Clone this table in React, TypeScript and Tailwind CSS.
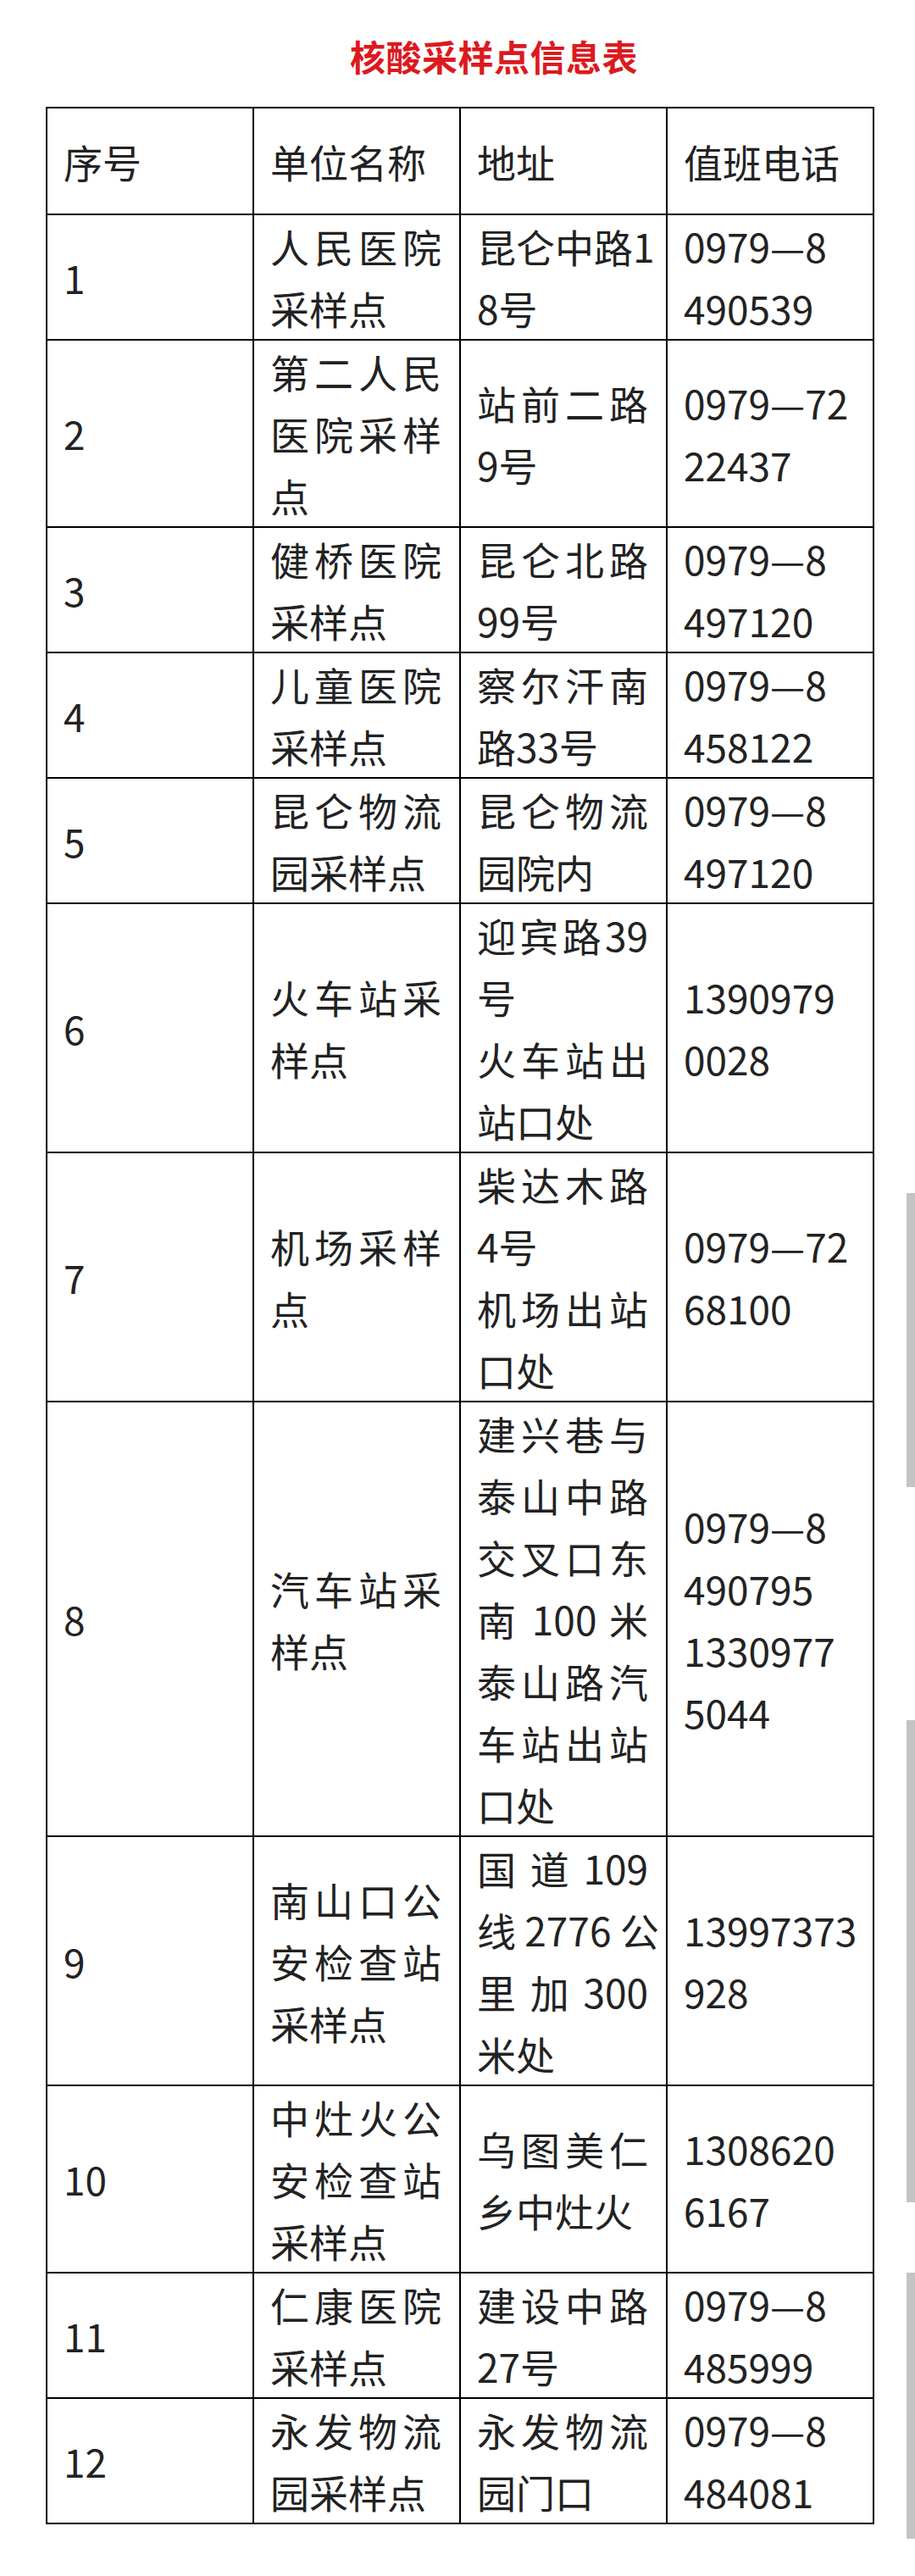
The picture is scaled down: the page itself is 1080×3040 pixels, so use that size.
type Cell = string[];
type Row = { no: string; name: Cell; addr: Cell; tel: Cell };

// lines starting with "=" are justified across the cell width
const rows: Row[] = [
  { no: "1", name: ["=人民医院", "采样点"], addr: ["=昆仑中路1", "8号"], tel: ["0979—8", "490539"] },
  { no: "2", name: ["=第二人民", "=医院采样", "点"], addr: ["=站前二路", "9号"], tel: ["0979—72", "22437"] },
  { no: "3", name: ["=健桥医院", "采样点"], addr: ["=昆仑北路", "99号"], tel: ["0979—8", "497120"] },
  { no: "4", name: ["=儿童医院", "采样点"], addr: ["=察尔汗南", "路33号"], tel: ["0979—8", "458122"] },
  { no: "5", name: ["=昆仑物流", "园采样点"], addr: ["=昆仑物流", "园院内"], tel: ["0979—8", "497120"] },
  { no: "6", name: ["=火车站采", "样点"], addr: ["=迎宾路39", "号", "=火车站出", "站口处"], tel: ["1390979", "0028"] },
  { no: "7", name: ["=机场采样", "点"], addr: ["=柴达木路", "4号", "=机场出站", "口处"], tel: ["0979—72", "68100"] },
  {
    no: "8",
    name: ["=汽车站采", "样点"],
    addr: ["=建兴巷与", "=泰山中路", "=交叉口东", "=南 100 米", "=泰山路汽", "=车站出站", "口处"],
    tel: ["0979—8", "490795", "1330977", "5044"],
  },
  { no: "9", name: ["=南山口公", "=安检查站", "采样点"], addr: ["=国 道 109", "=线 2776 公", "=里 加 300", "米处"], tel: ["13997373", "928"] },
  { no: "10", name: ["=中灶火公", "=安检查站", "采样点"], addr: ["=乌图美仁", "乡中灶火"], tel: ["1308620", "6167"] },
  { no: "11", name: ["=仁康医院", "采样点"], addr: ["=建设中路", "27号"], tel: ["0979—8", "485999"] },
  { no: "12", name: ["=永发物流", "园采样点"], addr: ["=永发物流", "园门口"], tel: ["0979—8", "484081"] },
];

const td = "border-2 border-black align-middle pl-[19px] pr-[21px] py-0";

function Lines({ lines }: { lines: Cell }) {
  return (
    <>
      {lines.map((l, i) =>
        l.startsWith("=") ? (
          <div key={i} className="whitespace-nowrap text-justify [text-align-last:justify]">
            {l.slice(1)}
          </div>
        ) : (
          <div key={i} className="whitespace-nowrap">
            {l}
          </div>
        )
      )}
    </>
  );
}

export default function App() {
  return (
    <div className="relative w-[1080px] h-[3040px] bg-white text-[#222] font-['Noto_Sans_CJK_SC',sans-serif]">
      <div className="pt-[36px] pl-[86px] h-[126px] text-center">
        <h1 className="text-[42px] leading-[60px] font-bold text-[#dc1a1e] tracking-[0.5px]">
          核酸采样点信息表
        </h1>
      </div>

      <table className="ml-[54px] w-[976px] table-fixed border-collapse text-[46px] leading-[73px]">
        <colgroup>
          <col className="w-[244px]" />
          <col className="w-[244px]" />
          <col className="w-[244px]" />
          <col className="w-[244px]" />
        </colgroup>
        <tbody>
          <tr className="h-[126px]">
            <td className={td}>序号</td>
            <td className={td}>单位名称</td>
            <td className={td}>地址</td>
            <td className={td}>值班电话</td>
          </tr>
          {rows.map((r) => (
            <tr key={r.no}>
              <td className={td}>{r.no}</td>
              <td className={td}>
                <Lines lines={r.name} />
              </td>
              <td className={td}>
                <Lines lines={r.addr} />
              </td>
              <td className={td}>
                <Lines lines={r.tel} />
              </td>
            </tr>
          ))}
        </tbody>
      </table>

      <div className="absolute right-0 top-[1408px] w-[10px] h-[347px] bg-[#c4c4c4]" />
      <div className="absolute right-0 top-[2030px] w-[10px] h-[569px] bg-[#c4c4c4]" />
      <div className="absolute right-0 top-[2682px] w-[10px] h-[314px] bg-[#c4c4c4]" />
    </div>
  );
}
